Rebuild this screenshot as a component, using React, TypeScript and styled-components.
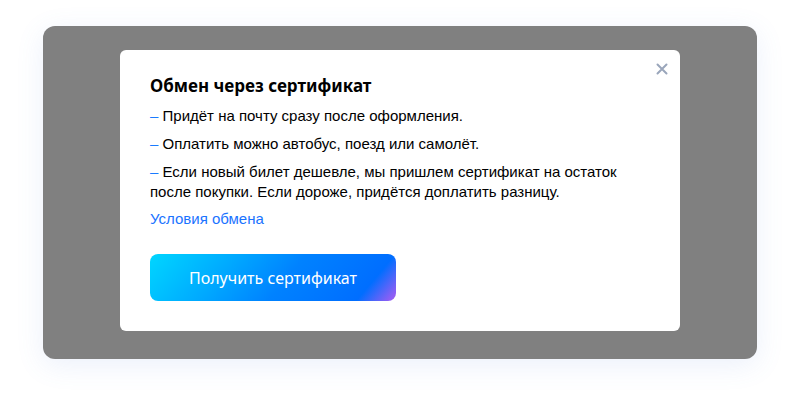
import React from "react";
import styled, { createGlobalStyle } from "styled-components";

const GlobalStyle = createGlobalStyle`
  html, body {
    margin: 0;
    padding: 0;
    background: #ffffff;
  }
  body {
    font-family: "Liberation Sans", Arial, sans-serif;
  }
`;

const Page = styled.div`
  width: 800px;
  height: 403px;
  padding: 26px 43px;
  box-sizing: border-box;
`;

const Overlay = styled.div`
  height: 333px;
  box-sizing: border-box;
  padding: 24px 77px;
  background: #808080;
  border-radius: 12px;
  box-shadow: 0 6px 28px rgba(90, 130, 220, 0.12);
`;

const Modal = styled.div`
  position: relative;
  background: #ffffff;
  border-radius: 6px;
  padding: 24px 30px 30px;
`;

const Close = styled.button`
  position: absolute;
  top: 11px;
  right: 10px;
  width: 16px;
  height: 16px;
  padding: 0;
  border: 0;
  background: none;
  display: flex;
  align-items: center;
  justify-content: center;
  cursor: pointer;
`;

const Title = styled.h2`
  margin: 0 0 8px;
  font-family: "Noto Sans", "Open Sans", sans-serif;
  font-size: 17px;
  line-height: 24px;
  font-weight: 700;
  color: #000;
`;

const List = styled.ul`
  margin: 0;
  padding: 0;
  list-style: none;
  display: flex;
  flex-direction: column;
  gap: 8px;
`;

const Item = styled.li`
  font-size: 15px;
  line-height: 20px;
  color: #000;
  &::before {
    content: "– ";
    color: #1a7bff;
  }
`;

const Link = styled.a`
  display: block;
  margin-top: 7px;
  font-size: 15px;
  line-height: 20px;
  color: #1a73ff;
  text-decoration: none;
`;

const Button = styled.button`
  margin-top: 25px;
  width: 246px;
  height: 47px;
  border: 0;
  border-radius: 8px;
  background: linear-gradient(
    130deg,
    #00d6ff 0%,
    #00aaff 30%,
    #0082ff 55%,
    #006eff 86%,
    #8a5ff5 97%,
    #a25df0 100%
  );
  color: #ffffff;
  font-family: "Noto Sans", "Open Sans", sans-serif;
  font-size: 16px;
  cursor: pointer;
`;

const items = [
  "Придёт на почту сразу после оформления.",
  "Оплатить можно автобус, поезд или самолёт.",
  "Если новый билет дешевле, мы пришлем сертификат на остаток после покупки. Если дороже, придётся доплатить разницу.",
];

export default function App() {
  return (
    <>
      <GlobalStyle />
      <Page>
        <Overlay>
          <Modal>
            <Close aria-label="Закрыть">
              <svg width="12" height="12" viewBox="0 0 12 12">
                <path d="M1.5 1.5L10.5 10.5M10.5 1.5L1.5 10.5" stroke="#9aa6bb" strokeWidth="2" strokeLinecap="round" />
              </svg>
            </Close>
            <Title>Обмен через сертификат</Title>
            <List>
              {items.map((text) => (
                <Item key={text}>{text}</Item>
              ))}
            </List>
            <Link href="#">Условия обмена</Link>
            <Button>Получить сертификат</Button>
          </Modal>
        </Overlay>
      </Page>
    </>
  );
}
